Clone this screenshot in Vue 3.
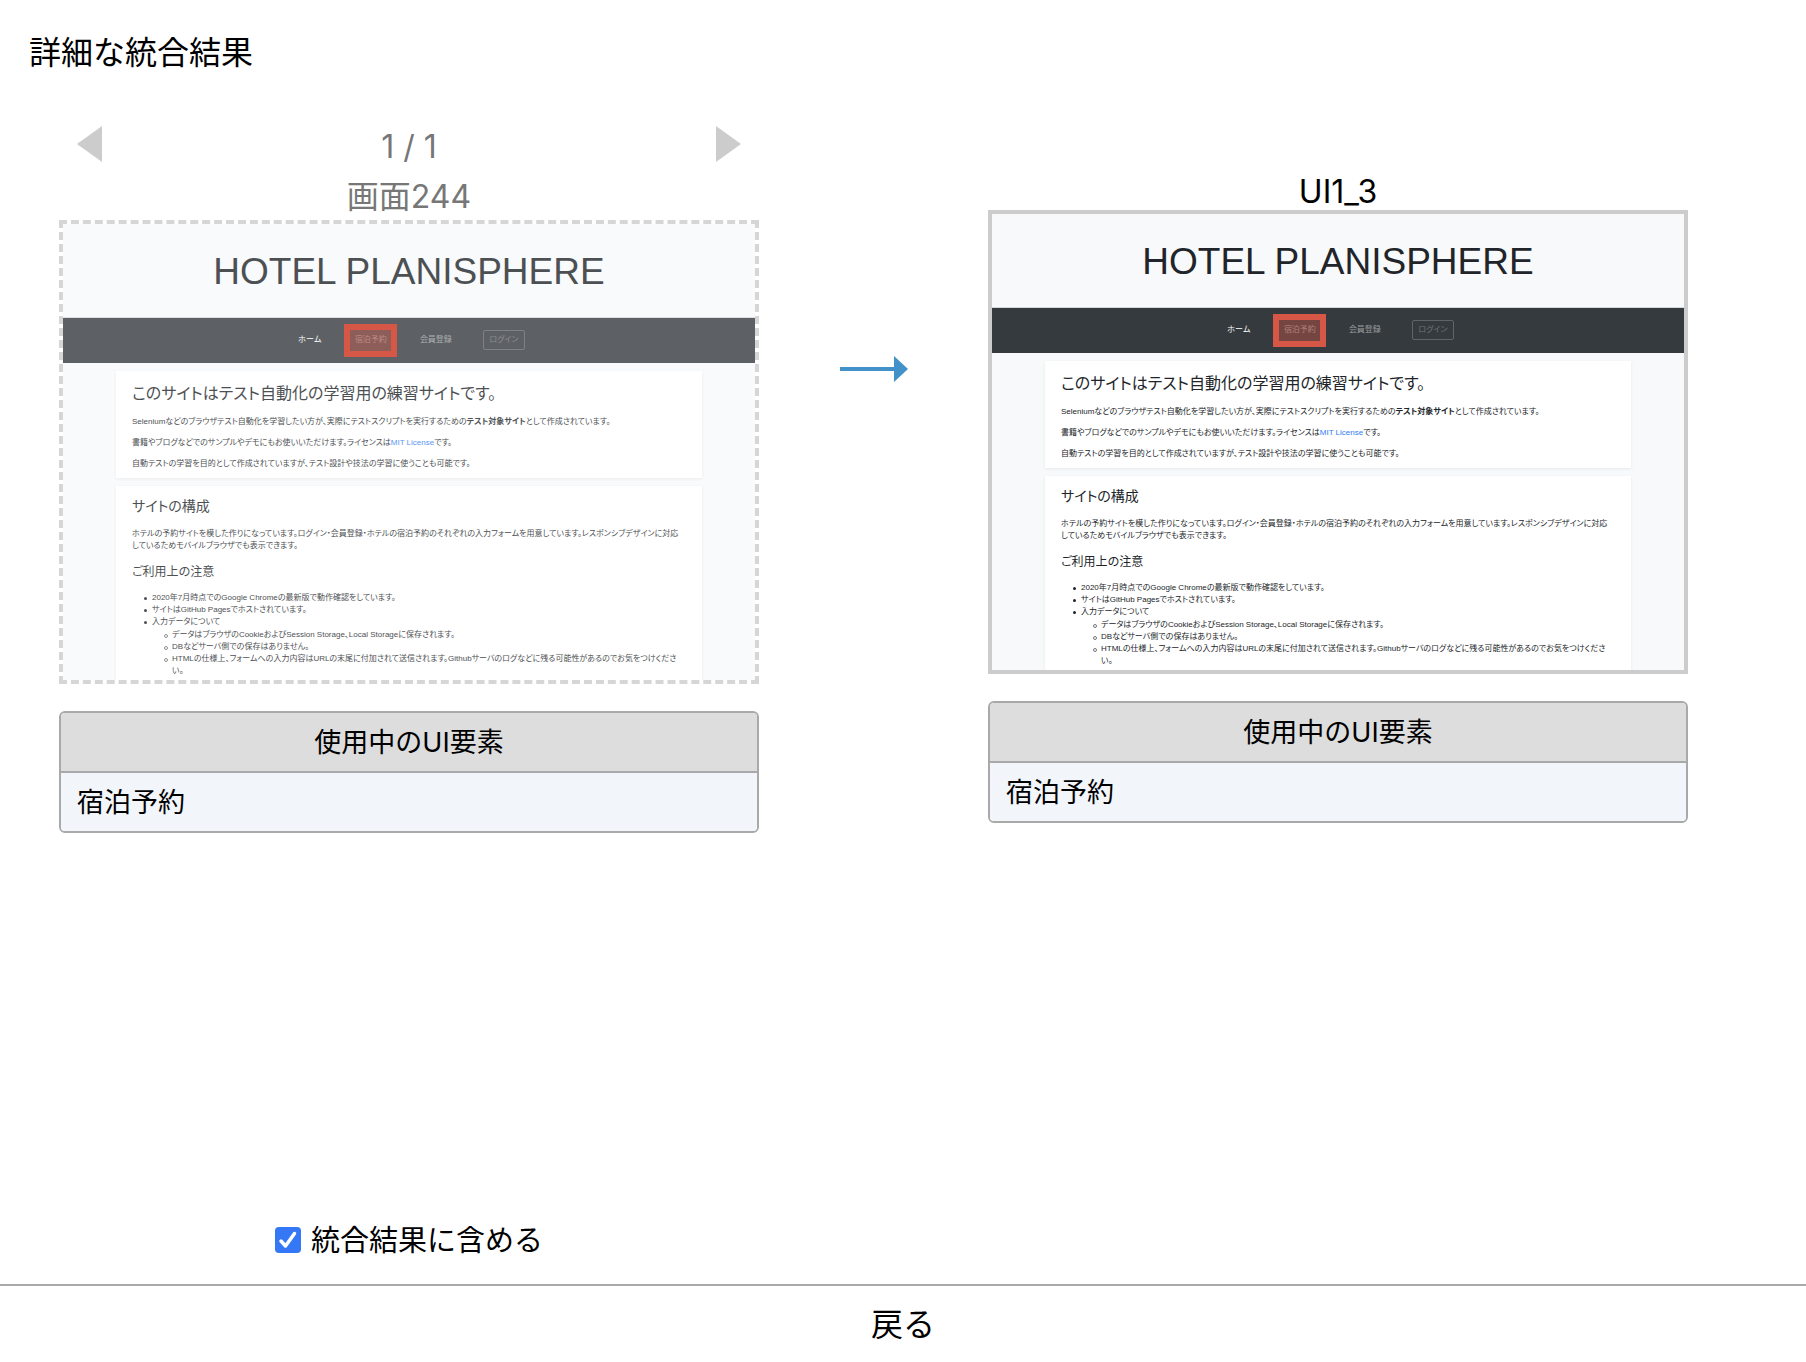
<script setup>
import { ref } from 'vue'

const included = ref(true)

const panes = [
  { id: 'source', title: '画面244', before: true },
  { id: 'merged', title: 'UI1_3', before: false },
]

const elements = ['宿泊予約']
</script>

<template>
  <div class="page">
    <h1 class="page-title">詳細な統合結果</h1>

    <main class="compare">
      <template v-for="pane in panes" :key="pane.id">
        <section class="pane" :class="{ before: pane.before }">
          <div v-if="pane.before" class="pager">
            <button type="button" class="step" aria-label="前へ" disabled>
              <svg width="25" height="36" viewBox="0 0 25 36"><path d="M25 0V36L0 18Z" fill="#ccc" /></svg>
            </button>
            <span class="count">1 / 1</span>
            <button type="button" class="step" aria-label="次へ" disabled>
              <svg width="25" height="36" viewBox="0 0 25 36"><path d="M0 0V36L25 18Z" fill="#ccc" /></svg>
            </button>
          </div>
          <h2 class="pane-title">{{ pane.title }}</h2>

          <div class="shot">
            <div class="site">
              <header class="site-head">HOTEL PLANISPHERE</header>
              <nav class="site-nav">
                <a href="#" class="active">ホーム</a>
                <a href="#">宿泊予約</a>
                <a href="#">会員登録</a>
                <button type="button">ログイン</button>
              </nav>
              <div class="card">
                <h3>このサイトはテスト自動化の学習用の練習サイトです。</h3>
                <p>Seleniumなどのブラウザテスト自動化を学習したい方が、実際にテストスクリプトを実行するための<strong>テスト対象サイト</strong>として作成されています。</p>
                <p>書籍やブログなどでのサンプルやデモにもお使いいただけます。ライセンスは<a href="#">MIT License</a>です。</p>
                <p>自動テストの学習を目的として作成されていますが、テスト設計や技法の学習に使うことも可能です。</p>
              </div>
              <div class="card">
                <h4>サイトの構成</h4>
                <p>ホテルの予約サイトを模した作りになっています。ログイン・会員登録・ホテルの宿泊予約のそれぞれの入力フォームを用意しています。レスポンシブデザインに対応しているためモバイルブラウザでも表示できます。</p>
                <h5>ご利用上の注意</h5>
                <ul>
                  <li>2020年7月時点でのGoogle Chromeの最新版で動作確認をしています。</li>
                  <li>サイトはGitHub Pagesでホストされています。</li>
                  <li>
                    入力データについて
                    <ul>
                      <li>データはブラウザのCookieおよびSession Storage、Local Storageに保存されます。</li>
                      <li>DBなどサーバ側での保存はありません。</li>
                      <li>HTMLの仕様上、フォームへの入力内容はURLの末尾に付加されて送信されます。Githubサーバのログなどに残る可能性があるのでお気をつけください。</li>
                    </ul>
                  </li>
                </ul>
              </div>
            </div>
            <div class="highlight"></div>
          </div>

          <table class="elements">
            <thead>
              <tr><th scope="col">使用中のUI要素</th></tr>
            </thead>
            <tbody>
              <tr v-for="name in elements" :key="name"><td>{{ name }}</td></tr>
            </tbody>
          </table>
        </section>

        <svg v-if="pane.before" class="arrow" width="68" height="26" viewBox="0 0 68 26">
          <path d="M0 11H54V0L68 13L54 26V15H0Z" fill="#4292c9" />
        </svg>
      </template>

      <label class="include">
        <span class="check">
          <input v-model="included" type="checkbox" />
          <svg v-if="included" width="26" height="26" viewBox="0 0 26 26">
            <path d="M6 14L10.5 19L19.5 6.500" fill="none" stroke="#fff" stroke-width="3.500" stroke-linecap="round" stroke-linejoin="round" />
          </svg>
        </span>
        <span class="include-text">統合結果に含める</span>
      </label>
    </main>

    <footer class="footer">
      <button type="button">戻る</button>
    </footer>
  </div>
</template>

<style>
body {
  margin: 0;
  background: #fff;
}
</style>

<style scoped>
* {
  box-sizing: border-box;
}

.page {
  display: flex;
  flex-direction: column;
  min-height: 100vh;
  font-family: Inter, "Noto Sans CJK JP", sans-serif;
  color: #000;
}

h1, h2, h3, h4, h5, p, ul {
  margin: 0;
  font-weight: 400;
}

button {
  padding: 0;
  border: 0;
  background: none;
  font: inherit;
  color: inherit;
}

svg {
  display: block;
}

.page-title {
  padding: 28px 29px 0;
  font-size: 32px;
  line-height: 49px;
}

.compare {
  flex: 1;
  display: grid;
  grid-template-columns: minmax(0, 1fr) 229px minmax(0, 1fr);
  grid-template-rows: 1fr auto;
  padding: 0 118px 22px 59px;
}

.pane {
  padding-top: 97px;
}

.pane.before {
  padding-top: 47px;
}

.pager {
  display: flex;
  justify-content: space-between;
  align-items: center;
  height: 40px;
  margin-bottom: 10px;
  padding: 0 18px;
  font-size: 32px;
  color: #777;
}

.count {
  padding-top: 4px;
}

.pane-title {
  font-size: 32px;
  line-height: 36px;
  text-align: center;
}

.before .pane-title {
  line-height: 46px;
  color: #777;
}

.shot {
  position: relative;
  aspect-ratio: 700 / 464;
  overflow: hidden;
  border: 4px solid #ccc;
}

.before .shot {
  border: 4px dashed #d6d6d6;
}

.site {
  height: 100%;
  overflow: hidden;
  background: #f8f9fb;
  color: #212529;
  font-family: "Liberation Sans", "Noto Sans CJK JP", sans-serif;
  font-size: 8px;
  line-height: 12px;
  font-feature-settings: "palt";
}

.before .site {
  opacity: 0.8;
}

.site-head {
  height: 94px;
  border-bottom: 1px solid #d5d8db;
  font-size: 37px;
  line-height: 95px;
  text-align: center;
}

.site-nav {
  display: flex;
  justify-content: center;
  align-items: center;
  gap: 29px;
  height: 45px;
  margin-bottom: 8px;
  padding: 0 0 2px 3px;
  background: #353a3e;
  color: #9a9c9e;
  font-feature-settings: normal;
}

.before .site-nav {
  background: #353a40;
}

.site-nav a {
  padding: 0 2px;
  color: inherit;
  text-decoration: none;
}

.site-nav .active {
  color: #fff;
}

.site-nav button {
  width: 42px;
  height: 20px;
  border: 1px solid #5f6468;
  border-radius: 2px;
  color: #6f7478;
  font-feature-settings: "palt";
}

.card {
  margin: 0 53px 8px;
  padding: 13px 18px 8px 16px;
  background: #fff;
  box-shadow: 0 1px 3px rgba(0, 0, 0, 0.07);
}

.card h3 {
  margin-bottom: 12px;
  font-size: 16px;
  line-height: 20px;
}

.card h4 {
  margin-bottom: 14px;
  font-size: 14px;
  line-height: 15px;
}

.card h5 {
  margin: 12px 0;
  font-size: 12px;
  line-height: 16px;
}

.card p + p {
  margin-top: 9px;
}

.card a {
  color: #2f7df6;
  text-decoration: none;
}

.card ul {
  padding-left: 20px;
  list-style: none;
}

.card ul ul {
  padding-top: 1px;
}

.card li {
  position: relative;
}

.card li::before {
  content: "";
  position: absolute;
  top: 5px;
  left: -8px;
  width: 3px;
  height: 3px;
  border-radius: 50%;
  background: currentColor;
}

.card li li::before {
  width: 2px;
  height: 2px;
  border: 1px solid #777;
  background: none;
}

.highlight {
  position: absolute;
  top: 100px;
  left: calc(50% - 65px);
  width: 53px;
  height: 33px;
  border: 6px solid #d65745;
  background: rgba(214, 87, 69, 0.4);
  background-clip: padding-box;
}

.elements {
  width: 100%;
  margin-top: 27px;
  border: 2px solid #a9a9a9;
  border-radius: 6px;
  border-spacing: 0;
  overflow: hidden;
  font-size: 27px;
  line-height: 40px;
}

.elements th {
  height: 60px;
  padding: 2px 16px 0;
  border-bottom: 2px solid #a9a9a9;
  background: #ddd;
  font-weight: 400;
}

.elements td {
  height: 58px;
  padding: 2px 16px 0;
  background: #f2f5fa;
}

.arrow {
  justify-self: center;
  margin-top: 279px;
}

.include {
  grid-column: 1;
  display: flex;
  justify-content: center;
  align-items: center;
  gap: 10px;
  height: 44px;
  font-size: 29px;
  line-height: 44px;
}

.include-text {
  padding-top: 2px;
}

.check {
  position: relative;
}

.check input {
  appearance: none;
  display: block;
  width: 26px;
  height: 26px;
  margin: 0;
  border: 1px solid #767676;
  border-radius: 4px;
}

.check input:checked {
  border: 0;
  background: #3478f6;
}

.check svg {
  position: absolute;
  inset: 0;
  pointer-events: none;
}

.footer {
  border-top: 2px solid #a9a9a9;
}

.footer button {
  display: block;
  width: 100%;
  height: 76px;
  padding-top: 2px;
  font-size: 32px;
  line-height: 74px;
}
</style>
